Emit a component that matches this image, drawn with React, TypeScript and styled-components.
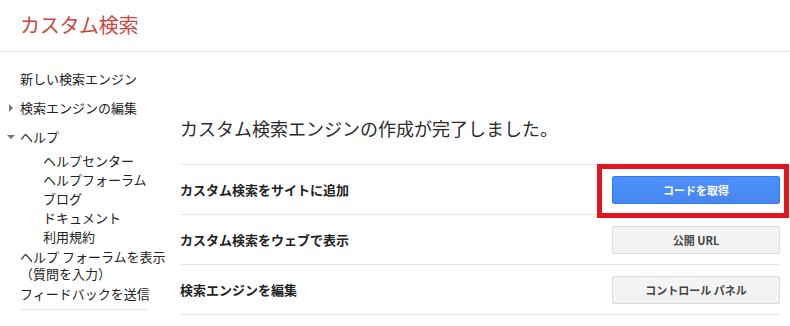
import React from "react";
import styled, { createGlobalStyle, css } from "styled-components";

const GlobalStyle = createGlobalStyle`
  * {
    box-sizing: border-box;
  }
  body {
    margin: 0;
    padding: 0;
    background: #fff;
    font-family: "Noto Sans CJK JP", "Liberation Sans", Arial, sans-serif;
    color: #222;
  }
`;

const Header = styled.header`
  height: 52px;
  border-bottom: 1px solid #e5e5e5;
  display: flex;
  align-items: center;
  padding: 0 0 2px 20px;
`;

const Logo = styled.h1`
  margin: 0;
  font-size: 20px;
  font-weight: 400;
  color: #c9483d;
  letter-spacing: -0.3px;
`;

const Body = styled.div`
  display: flex;
`;

const Sidebar = styled.nav`
  width: 160px;
  flex-shrink: 0;
  padding: 12px 12px 0 20px;
  font-size: 13px;
`;

const SideList = styled.div`
  border-bottom: 1px solid #e5e5e5;
  padding-bottom: 7px;
`;

const NavItem = styled.div`
  height: 29px;
  line-height: 29px;
  white-space: nowrap;
  display: flex;
  align-items: center;
`;

const Marker = styled.span<{ open?: boolean }>`
  width: 0;
  height: 0;
  border-style: solid;
  ${({ open }) =>
    open
      ? css`
          border-width: 4px 4px 0 4px;
          border-color: #777 transparent transparent transparent;
          margin-left: -13px;
          margin-right: 5px;
        `
      : css`
          border-width: 4px 0 4px 4px;
          border-color: transparent transparent transparent #777;
          margin-left: -11px;
          margin-right: 7px;
        `}
`;

const SubList = styled.div`
  padding-left: 23px;
`;

const SubItem = styled.div`
  height: 19px;
  line-height: 19px;
  white-space: nowrap;
`;

const Extra = styled.div<{ gap: number }>`
  margin-top: ${({ gap }) => gap}px;
  line-height: 17px;
  white-space: nowrap;
`;

const Main = styled.main`
  flex: 1;
  padding: 64px 10px 0 20px;
`;

const Title = styled.h2`
  margin: 0 0 24px;
  font-size: 18px;
  line-height: 24px;
  font-weight: 400;
  color: #2a2a2a;
`;

const Rows = styled.div`
  border-top: 1px solid #e5e5e5;
`;

const Row = styled.div`
  height: 50px;
  border-bottom: 1px solid #e5e5e5;
  display: flex;
  align-items: center;
  justify-content: space-between;
`;

const Label = styled.span`
  font-size: 13px;
  font-weight: 700;
  color: #222;
`;

const ButtonWrap = styled.div`
  position: relative;
`;

const Button = styled.button<{ primary?: boolean }>`
  width: 168px;
  height: 28px;
  border-radius: 2px;
  font-family: inherit;
  font-size: 11px;
  font-weight: 700;
  cursor: pointer;
  display: block;
  ${({ primary }) =>
    primary
      ? css`
          color: #fff;
          background: linear-gradient(#4d90fe, #4787ed);
          border: 1px solid #3079ed;
        `
      : css`
          color: #444;
          background: linear-gradient(#f5f5f5, #f1f1f1);
          border: 1px solid #dcdcdc;
        `}
`;

const Highlight = styled.span`
  position: absolute;
  top: -12px;
  left: -15px;
  right: -9px;
  bottom: -14px;
  border: 5px solid #e3141d;
  pointer-events: none;
`;

const rows = [
  { label: "カスタム検索をサイトに追加", button: "コードを取得", primary: true },
  { label: "カスタム検索をウェブで表示", button: "公開 URL" },
  { label: "検索エンジンを編集", button: "コントロール パネル" },
];

const helpLinks = ["ヘルプセンター", "ヘルプフォーラム", "ブログ", "ドキュメント", "利用規約"];

export default function App() {
  return (
    <>
      <GlobalStyle />
      <Header>
        <Logo>カスタム検索</Logo>
      </Header>
      <Body>
        <Sidebar>
          <SideList>
            <NavItem>新しい検索エンジン</NavItem>
            <NavItem>
              <Marker />
              検索エンジンの編集
            </NavItem>
            <NavItem>
              <Marker open />
              ヘルプ
            </NavItem>
            <SubList>
              {helpLinks.map((l) => (
                <SubItem key={l}>{l}</SubItem>
              ))}
            </SubList>
            <Extra gap={2}>
              ヘルプ フォーラムを表示
              <br />
              （質問を入力）
            </Extra>
            <Extra gap={3}>フィードバックを送信</Extra>
          </SideList>
        </Sidebar>
        <Main>
          <Title>カスタム検索エンジンの作成が完了しました。</Title>
          <Rows>
            {rows.map((r) => (
              <Row key={r.label}>
                <Label>{r.label}</Label>
                <ButtonWrap>
                  <Button primary={r.primary}>{r.button}</Button>
                  {r.primary && <Highlight />}
                </ButtonWrap>
              </Row>
            ))}
          </Rows>
        </Main>
      </Body>
    </>
  );
}
